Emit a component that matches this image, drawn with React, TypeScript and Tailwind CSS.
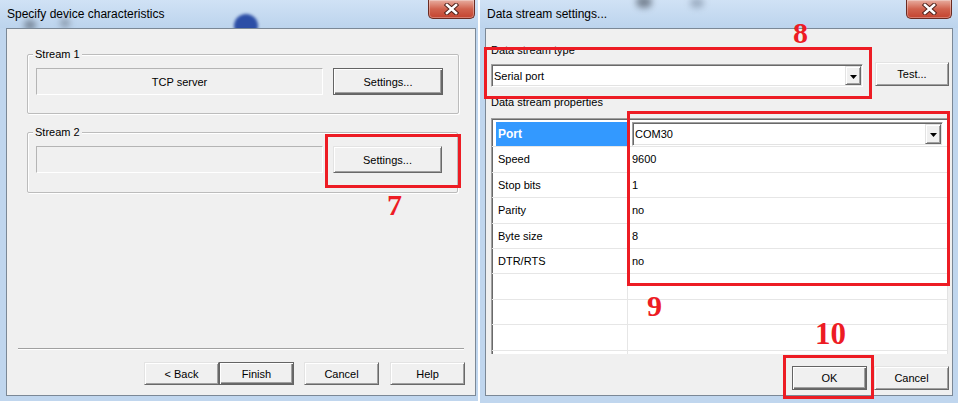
import React from "react";

const raised =
  "bg-[#f0f0f0] border border-t-[#e3e3e3] border-l-[#e3e3e3] border-r-[#696969] border-b-[#696969] shadow-[inset_1px_1px_0_#ffffff,inset_-1px_-1px_0_#a0a0a0]";
const defBtn =
  "bg-[#f0f0f0] border border-[#646464] shadow-[inset_1px_1px_0_#ffffff,inset_-1px_-1px_0_#696969,inset_-2px_-2px_0_#a0a0a0]";
const sunken =
  "bg-white border border-t-[#a0a0a0] border-l-[#a0a0a0] border-r-white border-b-white shadow-[inset_1px_1px_0_#696969,inset_-1px_-1px_0_#e3e3e3]";
const staticEdge =
  "bg-[#f0f0f0] border border-t-[#b4b4b4] border-l-[#b4b4b4] border-r-white border-b-white";
const group =
  "relative border border-[#bcbcbc] rounded-[2px] shadow-[inset_1px_1px_0_#ffffff,1px_1px_0_#ffffff]";

function Btn({ className, label, def }: { className: string; label: string; def?: boolean }) {
  return (
    <div className={`${def ? defBtn : raised} flex items-center justify-center text-[11px] text-black pt-[1px] ${className}`}>
      {label}
    </div>
  );
}

function Arrow() {
  return (
    <div className={`${raised} w-[16px] m-[1px] flex items-center justify-center`}>
      <svg width="7" height="4" viewBox="0 0 7 4" className="mt-[2px]">
        <path d="M0 0H7L3.5 4Z" fill="#000" />
      </svg>
    </div>
  );
}

function CloseBtn({ pos }: { pos: string }) {
  return (
    <div
      className={`absolute top-0 ${pos} h-[19px] rounded-b-[5px] border border-t-0 border-[#6a2b22] bg-gradient-to-b from-[#e7ada0] via-[#d0624e] to-[#c3432f] shadow-[inset_0_0_0_1px_rgba(255,255,255,0.3)] flex items-start justify-center`}
    >
      <svg width="15" height="12" viewBox="0 0 15 12" className="mt-[3px]">
        <path d="M3 2L12 10M12 2L3 10" stroke="#4a1d16" strokeWidth="4.4" strokeLinecap="square" />
        <path d="M3 2L12 10M12 2L3 10" stroke="#ffffff" strokeWidth="2.6" strokeLinecap="square" />
      </svg>
    </div>
  );
}

const rows: { label: string; value: string }[] = [
  { label: "Port", value: "COM30" },
  { label: "Speed", value: "9600" },
  { label: "Stop bits", value: "1" },
  { label: "Parity", value: "no" },
  { label: "Byte size", value: "8" },
  { label: "DTR/RTS", value: "no" },
  { label: "", value: "" },
  { label: "", value: "" },
  { label: "", value: "" },
  { label: "", value: "" },
];

const num = "absolute font-['Liberation_Serif',serif] font-bold text-[30px] leading-none text-[#ed1c24]";
const redBox = "absolute border-[3px] border-[#ed1c24]";

export default function App() {
  return (
    <div className="relative w-[958px] h-[403px] bg-white flex overflow-hidden font-['Liberation_Sans',Arial,sans-serif] text-black">
      {/* Left window */}
      <div className="relative w-[478px] h-[401px] bg-[#c0d6ee] flex flex-col">
        <div className="relative h-[28px] bg-gradient-to-b from-[#d0e2f5] to-[#bcd4ed] overflow-hidden flex pl-[7px] pt-[7px]">
          <div className="absolute left-[24px] top-[20px] w-[12px] h-[10px] rounded-full bg-[#5a6676] blur-[3px] opacity-70" />
          <div className="absolute left-[60px] top-[18px] w-[10px] h-[10px] rounded-full bg-[#6a7686] blur-[3px] opacity-60" />
          <div className="absolute left-[234px] top-[14px] w-[24px] h-[24px] rounded-full bg-[#2c4ea6] blur-[1.5px]" />
          <span className="relative text-[12px] leading-[15px]">Specify device characteristics</span>
        </div>
        <CloseBtn pos="left-[428px] w-[47px]" />
        <div className="ml-[6px] w-[470px] h-[368px] border border-[#7b8896] bg-[#f0f0f0] flex flex-col text-[11px]">
          <div className={`${group} ml-[20px] mt-[25px] w-[432px] h-[60px]`}>
            <span className="absolute left-[5px] top-[-8px] px-[2px] bg-[#f0f0f0] leading-[14px]">Stream 1</span>
            <div className="flex pl-[8px] pt-[13px] gap-[10px]">
              <div className={`${staticEdge} w-[287px] h-[27px] flex items-center justify-center pt-[1px]`}>TCP server</div>
              <Btn className="w-[110px] h-[27px]" label="Settings..." def />
            </div>
          </div>
          <div className={`${group} ml-[20px] mt-[18px] w-[431px] h-[61px]`}>
            <span className="absolute left-[5px] top-[-8px] px-[2px] bg-[#f0f0f0] leading-[14px]">Stream 2</span>
            <div className="flex pl-[8px] pt-[13px] gap-[10px]">
              <div className={`${staticEdge} w-[287px] h-[27px]`} />
              <Btn className="w-[109px] h-[27px]" label="Settings..." />
            </div>
          </div>
          <div className="ml-[11px] mt-[155px] w-[446px] h-[2px] border-t border-[#a0a0a0] border-b border-b-white" />
          <div className="flex mt-[12px] ml-[137px]">
            <Btn className="w-[75px] h-[23px]" label="< Back" />
            <Btn className="w-[75px] h-[23px]" label="Finish" def />
            <Btn className="ml-[10px] w-[75px] h-[23px]" label="Cancel" />
            <Btn className="ml-[11px] w-[75px] h-[23px]" label="Help" />
          </div>
        </div>
      </div>

      {/* Right window */}
      <div className="relative ml-[2px] w-[478px] h-[403px] bg-[#c0d6ee] flex flex-col">
        <div className="relative h-[28px] bg-gradient-to-b from-[#d0e2f5] to-[#bcd4ed] overflow-hidden flex pl-[7px] pt-[7px]">
          <div className="absolute left-[156px] top-[-4px] w-[16px] h-[12px] rounded-full bg-[#56606e] blur-[3px] opacity-70" />
          <div className="absolute left-[210px] top-[-2px] w-[14px] h-[10px] rounded-full bg-[#7d8ea3] blur-[3px] opacity-60" />
          <span className="relative text-[12px] leading-[15px]">Data stream settings...</span>
        </div>
        <CloseBtn pos="left-[426px] w-[46px]" />
        <div className="ml-[5px] w-[468px] h-[368px] border border-[#7b8896] bg-[#f0f0f0] flex flex-col pl-[5px] text-[11px]">
          <div className="pt-[14px] leading-[14px]">Data stream type</div>
          <div className="flex mt-[7px] items-start">
            <div className={`${sunken} w-[372px] h-[23px] flex`}>
              <span className="flex-1 pl-[2px] pt-[1px] flex items-center">Serial port</span>
              <Arrow />
            </div>
            <Btn className="ml-[12px] mt-[-2px] w-[74px] h-[24px]" label="Test..." />
          </div>
          <div className="mt-[8px] leading-[14px]">Data stream properties</div>
          <div className="mt-[9px] w-[457px] h-[236px] overflow-hidden bg-white border-t border-l border-r border-t-[#a0a0a0] border-l-[#a0a0a0] border-r-[#e3e3e3] shadow-[inset_1px_1px_0_#696969] pt-[3px]">
            {rows.map((r, i) => (
              <div key={i} className="flex h-[25.4px] border-b border-[#e6e6e6]">
                <div className="w-[4px] shrink-0" />
                <div
                  className={`w-[132px] shrink-0 border-r border-[#e6e6e6] pl-[2px] flex items-center ${
                    i === 0 ? "bg-[#3399ff] text-white font-bold text-[12px]" : ""
                  }`}
                >
                  {r.label}
                </div>
                <div className="flex-1 pl-[4px] flex items-center">
                  {i === 0 ? (
                    <div className={`${sunken} w-[311px] h-[24px] flex`}>
                      <span className="flex-1 pl-[2px] flex items-center">{r.value}</span>
                      <Arrow />
                    </div>
                  ) : (
                    r.value
                  )}
                </div>
              </div>
            ))}
          </div>
          <div className="mt-[12px] flex justify-end pr-[3px] gap-[7px]">
            <Btn className="w-[75px] h-[24px]" label="OK" def />
            <Btn className="w-[75px] h-[24px]" label="Cancel" />
          </div>
        </div>
      </div>

      {/* Annotations */}
      <div className={`${redBox} left-[325px] top-[134px] w-[136px] h-[54px]`} />
      <div className={`${redBox} left-[484px] top-[47px] w-[388px] h-[52px]`} />
      <div className={`${redBox} left-[627px] top-[111px] w-[323px] h-[175px]`} />
      <div className={`${redBox} left-[783px] top-[355px] w-[91px] h-[44px]`} />
      <span className={`${num} left-[387px] top-[190px]`}>7</span>
      <span className={`${num} left-[793px] top-[18px]`}>8</span>
      <span className={`${num} left-[647px] top-[291px]`}>9</span>
      <span className={`${num} left-[815px] top-[318px] text-[31px]`}>10</span>
    </div>
  );
}
